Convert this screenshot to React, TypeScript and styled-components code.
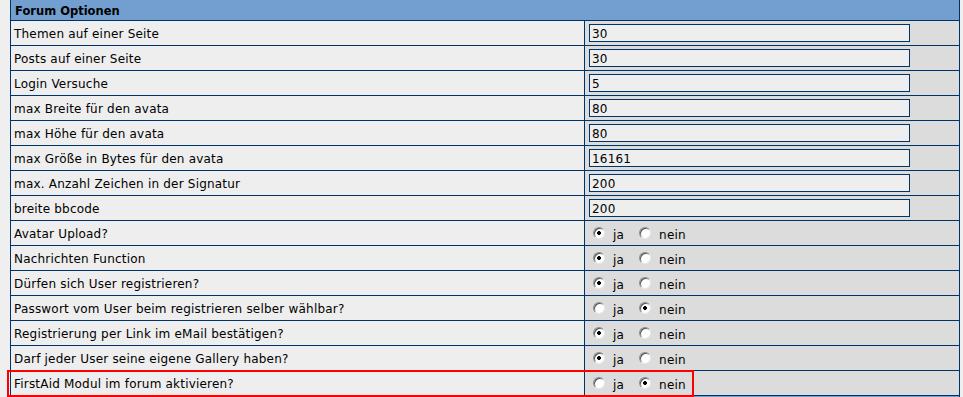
import React from 'react';
import { createGlobalStyle, styled } from 'styled-components';

const GlobalStyle = createGlobalStyle`
  body {
    margin: 0;
    background: #efefef;
    font-family: "DejaVu Sans", Verdana, sans-serif;
    font-size: 12px;
    letter-spacing: 0.2px;
    color: #000;
  }
`;

const Page = styled.div`
  padding: 0 3px 0 10px;
`;

const Wrap = styled.div`
  position: relative;
`;

const Table = styled.table`
  width: 950px;
  border-collapse: collapse;
  table-layout: fixed;
`;

const LabelCol = styled.col`
  width: 574px;
`;

const HeaderCell = styled.th`
  height: 19px;
  padding: 1px 4px 0;
  background: #729fcf;
  border: 1px solid #003468;
  border-top: none;
  text-align: left;
  font-weight: bold;
  font-size: 11.5px;
  letter-spacing: 0;
`;

const LabelCell = styled.td`
  height: 23px;
  padding: 1px 3px 0;
  background: #eeeeee;
  border: 1px solid #003468;
  white-space: nowrap;
`;

const ValueCell = styled.td`
  height: 24px;
  padding: 0 4px;
  background: #dcdcdc;
  border: 1px solid #003468;
  white-space: nowrap;
`;

const TextInput = styled.input`
  display: block;
  box-sizing: border-box;
  width: 321px;
  height: 18px;
  margin: 0;
  padding: 1px 2px 0;
  border: 1px solid #003468;
  background: #eeeeee;
  font-family: "DejaVu Sans", Verdana, sans-serif;
  font-size: 12px;
  letter-spacing: 0.2px;
  color: #000;
  outline: none;
`;

const Options = styled.div`
  display: flex;
  align-items: center;
  gap: 11px;
`;

const Option = styled.label`
  display: inline-flex;
  align-items: center;
  gap: 8px;
  padding-top: 3px;
`;

const Radio = styled.input`
  appearance: none;
  box-sizing: border-box;
  width: 12px;
  height: 12px;
  margin: 0 0 3px 4px;
  border-radius: 50%;
  border: 1px solid;
  border-color: #8c8c8c #e8e8e8 #e8e8e8 #8c8c8c;
  box-shadow: inset 1px 1px 0 #555;
  background: #fff;

  &:checked {
    background: radial-gradient(circle, #000 0 1.6px, #fff 2.2px);
  }
`;

const Marker = styled.div`
  position: absolute;
  left: -3px;
  top: 370px;
  width: 687px;
  height: 27px;
  box-sizing: border-box;
  border: 2px solid #ff0000;
  pointer-events: none;
`;

type Field =
  | { label: string; kind: 'text'; value: string }
  | { label: string; kind: 'yesno'; value: boolean };

const fields: Field[] = [
  { label: 'Themen auf einer Seite', kind: 'text', value: '30' },
  { label: 'Posts auf einer Seite', kind: 'text', value: '30' },
  { label: 'Login Versuche', kind: 'text', value: '5' },
  { label: 'max Breite für den avata', kind: 'text', value: '80' },
  { label: 'max Höhe für den avata', kind: 'text', value: '80' },
  { label: 'max Größe in Bytes für den avata', kind: 'text', value: '16161' },
  { label: 'max. Anzahl Zeichen in der Signatur', kind: 'text', value: '200' },
  { label: 'breite bbcode', kind: 'text', value: '200' },
  { label: 'Avatar Upload?', kind: 'yesno', value: true },
  { label: 'Nachrichten Function', kind: 'yesno', value: true },
  { label: 'Dürfen sich User registrieren?', kind: 'yesno', value: true },
  { label: 'Passwort vom User beim registrieren selber wählbar?', kind: 'yesno', value: false },
  { label: 'Registrierung per Link im eMail bestätigen?', kind: 'yesno', value: true },
  { label: 'Darf jeder User seine eigene Gallery haben?', kind: 'yesno', value: true },
  { label: 'FirstAid Modul im forum aktivieren?', kind: 'yesno', value: false },
];

export default function App() {
  return (
    <>
      <GlobalStyle />
      <Page>
        <Wrap>
          <Table>
            <colgroup>
              <LabelCol />
              <col />
            </colgroup>
            <thead>
              <tr>
                <HeaderCell colSpan={2}>Forum Optionen</HeaderCell>
              </tr>
            </thead>
            <tbody>
              {fields.map((f, i) => (
                <tr key={i}>
                  <LabelCell>{f.label}</LabelCell>
                  <ValueCell>
                    {f.kind === 'text' ? (
                      <TextInput defaultValue={f.value} />
                    ) : (
                      <Options>
                        <Option>
                          <Radio type="radio" name={'opt' + i} defaultChecked={f.value} />
                          ja
                        </Option>
                        <Option>
                          <Radio type="radio" name={'opt' + i} defaultChecked={!f.value} />
                          nein
                        </Option>
                      </Options>
                    )}
                  </ValueCell>
                </tr>
              ))}
              <tr>
                <HeaderCell colSpan={2} />
              </tr>
            </tbody>
          </Table>
          <Marker />
        </Wrap>
      </Page>
    </>
  );
}
